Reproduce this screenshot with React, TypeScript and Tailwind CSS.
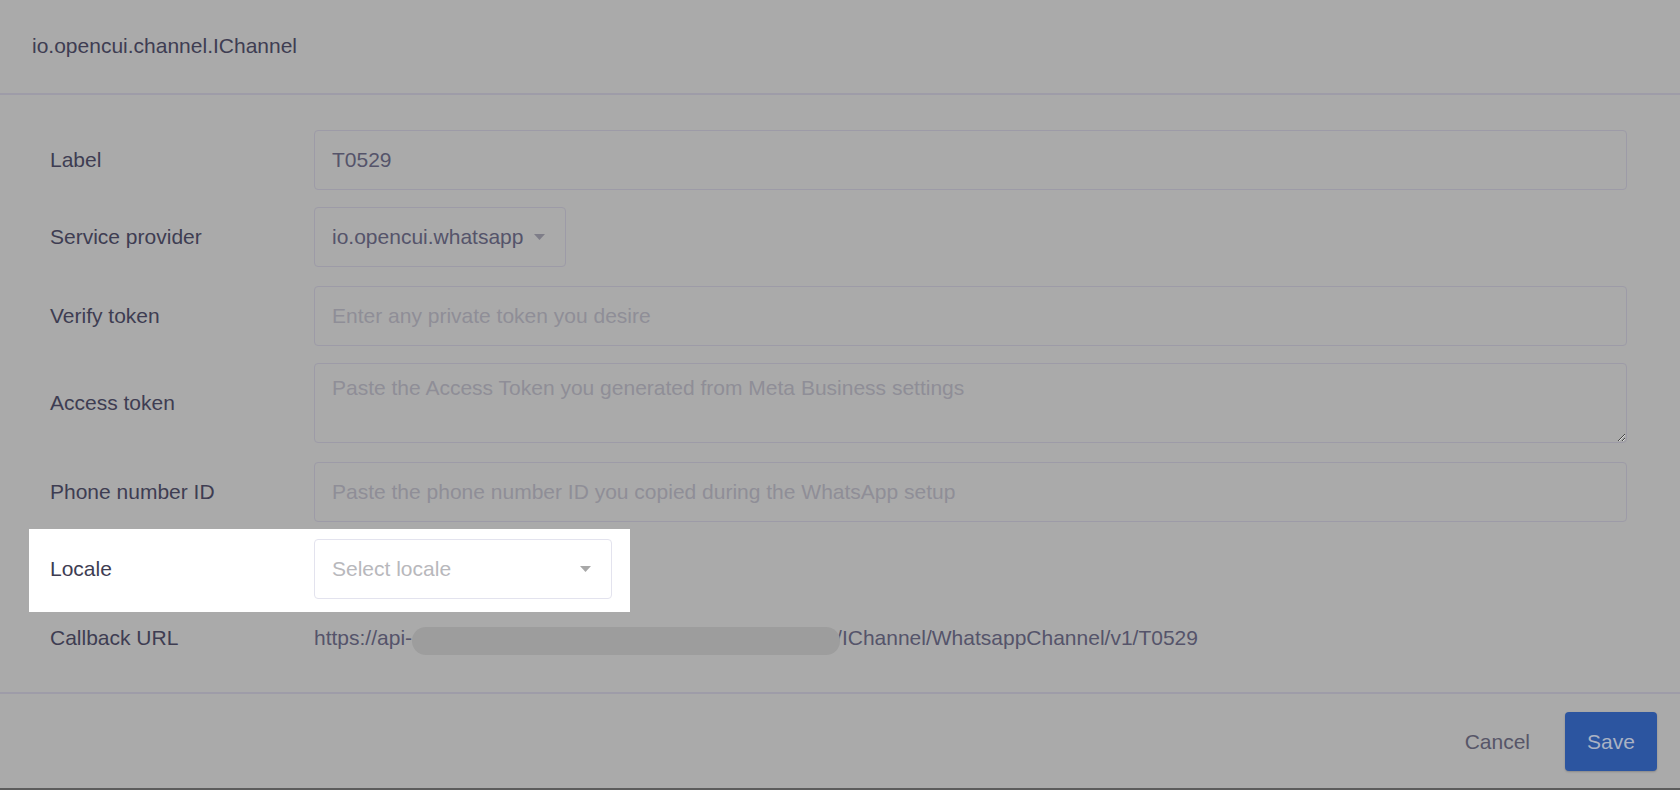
import { useState } from "react";

const font = { fontFamily: '"Liberation Sans", Arial, sans-serif' };

function Caret({ light }: { light?: boolean }) {
  return (
    <svg width="11" height="6" viewBox="0 0 11 6" className="shrink-0">
      <path d="M0 0 L11 0 L5.5 6 Z" fill={light ? "#a8a8a8" : "#7e7d88"} />
    </svg>
  );
}

function Row({ label, className, children }: { label: string; className?: string; children: React.ReactNode }) {
  return (
    <div className={"flex items-center " + (className ?? "")}>
      <div className="w-[264px] shrink-0 text-[21px] text-[#3e3d52]">{label}</div>
      {children}
    </div>
  );
}

const inputCls =
  "h-[60px] flex-1 rounded-[4px] border border-[#9d9ba7] bg-transparent px-[17px] text-[21px] text-[#55546a] outline-none placeholder:text-[#8f8e97]";

export default function App() {
  const [label, setLabel] = useState("T0529");

  return (
    <div style={font} className="flex h-[790px] w-full flex-col overflow-hidden bg-[#aaaaaa]">
      {/* header */}
      <div className="flex h-[95px] shrink-0 items-center border-b-2 border-[#9e9ca8] pb-[2px] pl-[32px] text-[21px] text-[#3e3d52]">
        io.opencui.channel.IChannel
      </div>

      {/* form */}
      <div className="flex flex-1 flex-col gap-[17px] pt-[35px] pr-[53px] pl-[50px]">
        <Row label="Label">
          <input className={inputCls} value={label} onChange={(e) => setLabel(e.target.value)} />
        </Row>
        <Row label="Service provider">
          <div className="flex h-[60px] w-[252px] items-center justify-between rounded-[4px] border border-[#9d9ba7] pr-[20px] pl-[17px] text-[21px] text-[#55546a]">
            <span>io.opencui.whatsapp</span>
            <Caret />
          </div>
        </Row>
        <Row label="Verify token" className="mt-[2px]">
          <input className={inputCls} placeholder="Enter any private token you desire" readOnly />
        </Row>
        <Row label="Access token">
          <textarea
            className="h-[80px] flex-1 rounded-[4px] border border-[#9d9ba7] bg-transparent px-[17px] pt-[11px] text-[21px] leading-[26px] text-[#55546a] outline-none placeholder:text-[#8f8e97]"
            placeholder="Paste the Access Token you generated from Meta Business settings"
            readOnly
          />
        </Row>
        <Row label="Phone number ID" className="mt-[2px]">
          <input
            className={inputCls}
            placeholder="Paste the phone number ID you copied during the WhatsApp setup"
            readOnly
          />
        </Row>

        {/* highlighted row */}
        <div className="-mt-[10px] -ml-[21px] flex w-[601px] items-center bg-white pt-[10px] pb-[13px] pl-[21px]">
          <div className="w-[264px] shrink-0 text-[21px] text-[#3e3d52]">Locale</div>
          <div className="flex h-[60px] w-[298px] items-center justify-between rounded-[4px] border border-[#e3e3ee] pr-[20px] pl-[17px] text-[21px] text-[#b8b8bc]">
            <span>Select locale</span>
            <Caret light />
          </div>
        </div>

        <div className="-mt-[7px] flex items-center">
          <div className="w-[264px] shrink-0 text-[21px] text-[#3e3d52]">Callback URL</div>
          <div className="flex items-center text-[21px] text-[#55546a]">
            <span>https://api-</span>
            <span className="relative top-[3px] -mr-[4px] inline-block h-[28px] w-[428px] rounded-full bg-[#9d9d9d]" />
            <span>/IChannel/WhatsappChannel/v1/T0529</span>
          </div>
        </div>
      </div>

      {/* footer */}
      <div className="flex h-[96px] shrink-0 items-start justify-end gap-[17px] border-t-2 border-[#9e9ca8] pt-[18px] pr-[23px]">
        <button className="h-[59px] rounded-[4px] px-[18px] text-[21px] text-[#575668]">Cancel</button>
        <button className="h-[59px] w-[92px] rounded-[4px] bg-[#2c55a0] text-[21px] text-[#aab2c4] shadow-[0_1px_2px_rgba(0,0,0,0.2)]">
          Save
        </button>
      </div>
      <div className="h-[2px] shrink-0 bg-[#5c5c5c]" />
    </div>
  );
}
